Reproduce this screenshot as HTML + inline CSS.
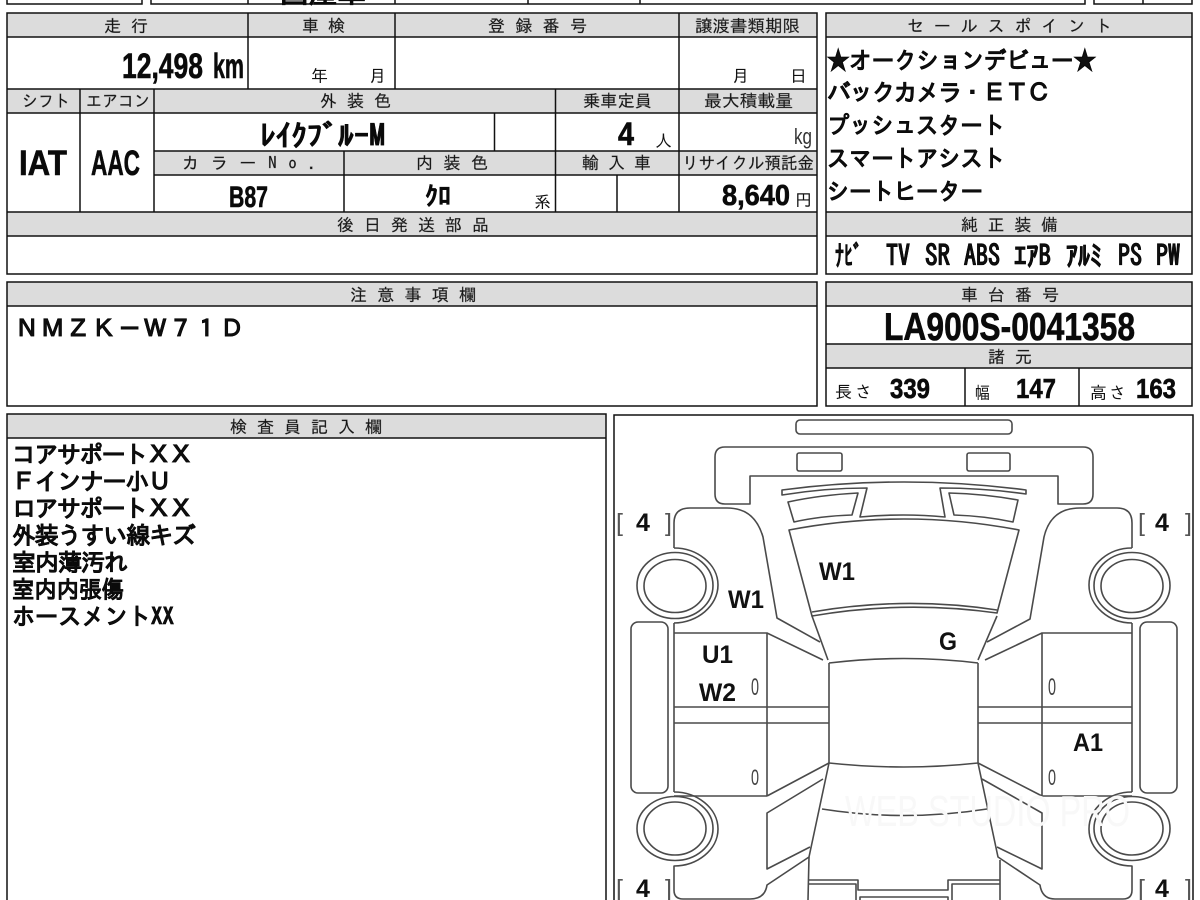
<!DOCTYPE html>
<html><head><meta charset="utf-8"><style>
html,body{margin:0;padding:0;background:#fff;width:1200px;height:900px;overflow:hidden}
svg{display:block}
text{font-family:"IPAGothic","Liberation Sans","Noto Sans CJK JP",sans-serif;fill:#111}
.h text{stroke:#555;stroke-width:.3}
.h{font-size:17px;fill:#333}
.t{font-size:17px;fill:#333}
.n{font-family:"Liberation Sans","IPAGothic",sans-serif;font-weight:bold;fill:#0a0a0a;stroke:#0a0a0a;stroke-width:.6}
.b{font-weight:bold;fill:#0a0a0a;stroke:#0a0a0a;stroke-width:.3}
.j{font-size:24px;font-weight:bold;fill:#0a0a0a}
.j text{stroke:#0a0a0a;stroke-width:.25}
.l{font-family:"Liberation Sans","Noto Sans CJK JP",sans-serif;font-weight:bold;font-size:25px;fill:#111}
.br{font-family:"Liberation Sans",sans-serif;font-size:25px;fill:#555}
.g{fill:#dcdcdc;stroke:none}
.k{fill:none;stroke:#111;stroke-width:1.5}
.d{fill:none;stroke:#4a4a4a;stroke-width:1.6;stroke-linejoin:round}
.z{font-family:"Liberation Sans",sans-serif;fill:#444}
</style></head><body>
<svg width="1200" height="900" viewBox="0 0 1200 900" xmlns="http://www.w3.org/2000/svg">
<!-- top strip -->
<g class="k">
<path d="M7 0V4H142V0M151 0V4H248V0M248 0V4H395V0M395 0V4H528V0M528 0V4H640V0M640 0V4H1085V0M1094 0V4H1143V0M1143 0V4H1192V0"/>
</g>
<text x="280" y="3" class="b" font-size="24" textLength="86" lengthAdjust="spacingAndGlyphs">国産車</text>

<!-- main panel fills -->
<rect class="g" x="7" y="13" width="810" height="24"/>
<rect class="g" x="7" y="89" width="810" height="24"/>
<rect class="g" x="154" y="151" width="525" height="24"/>
<rect class="g" x="679" y="151" width="138" height="24"/>
<rect class="g" x="7" y="212" width="810" height="24"/>
<rect class="g" x="826" y="13" width="366" height="24"/>
<rect class="g" x="826" y="212" width="366" height="24"/>
<rect class="g" x="7" y="282" width="810" height="24"/>
<rect class="g" x="826" y="282" width="366" height="24"/>
<rect class="g" x="826" y="344" width="366" height="24"/>
<rect class="g" x="7" y="414" width="599" height="24"/>

<!-- main panel lines -->
<g class="k">
<rect x="7" y="13" width="810" height="261"/>
<path d="M7 37H817M7 89H817M7 113H817M154 151H817M154 175H817M7 212H817M7 236H817"/>
<path d="M248 13V89M395 13V89M679 13V212M80 89V212M154 89V212M494.500 113V151M344 151V212M555.500 89V212M617 175V212"/>
<rect x="826" y="13" width="366" height="261"/>
<path d="M826 37H1192M826 212H1192M826 236H1192"/>
<rect x="7" y="282" width="810" height="124"/>
<path d="M7 306H817"/>
<rect x="826" y="282" width="366" height="124"/>
<path d="M826 306H1192M826 344H1192M826 368H1192M965 368V406M1079 368V406"/>
<path d="M7 900V414H606V900M7 438H606"/>
<path d="M614 900V415H1193V900"/>
</g>

<!-- headers -->
<g class="h">
<text x="104" y="32" textLength="44">走行</text>
<text x="302" y="32" textLength="43">車検</text>
<text x="488" y="32" textLength="99">登録番号</text>
<text x="695" y="32" textLength="105" lengthAdjust="spacingAndGlyphs">譲渡書類期限</text>
<text x="907" y="32" textLength="205">セールスポイント</text>
<text x="22" y="107" textLength="48" lengthAdjust="spacingAndGlyphs">シフト</text>
<text x="86" y="107" textLength="64" lengthAdjust="spacingAndGlyphs">エアコン</text>
<text x="320" y="107" textLength="71">外装色</text>
<text x="583" y="107" textLength="69" lengthAdjust="spacingAndGlyphs">乗車定員</text>
<text x="704" y="107" textLength="89" lengthAdjust="spacingAndGlyphs">最大積載量</text>
<text x="182" y="169" textLength="135">カラーNo.</text>
<text x="416" y="169" textLength="72">内装色</text>
<text x="582" y="169" textLength="69">輸入車</text>
<text x="682" y="169" textLength="132" lengthAdjust="spacingAndGlyphs">リサイクル預託金</text>
<text x="337" y="231" textLength="152">後日発送部品</text>
<text x="961" y="231" textLength="97">純正装備</text>
<text x="350" y="301" textLength="126">注意事項欄</text>
<text x="961" y="301" textLength="98">車台番号</text>
<text x="988" y="363" textLength="44">諸元</text>
<text x="230" y="433" textLength="152">検査員記入欄</text>
</g>

<!-- small labels -->
<g class="t">
<text x="311" y="82">年</text><text x="369" y="82">月</text>
<text x="732" y="82">月</text><text x="790" y="82">日</text>
<text x="655" y="147">人</text>
<text x="534" y="208">系</text>
<text x="795" y="206">円</text>
<text x="835" y="398" textLength="37">長さ</text>
<text x="975" y="399" textLength="15" lengthAdjust="spacingAndGlyphs">幅</text>
<text x="1090" y="399" textLength="36">高さ</text>
</g>
<text x="794" y="144" font-size="22" style="font-family:'Liberation Sans',sans-serif;fill:#333" textLength="18" lengthAdjust="spacingAndGlyphs">kg</text>

<!-- values -->
<text class="n" x="122" y="78" font-size="35" textLength="81" lengthAdjust="spacingAndGlyphs">12,498</text>
<text class="n" x="213" y="78" font-size="35" textLength="31" lengthAdjust="spacingAndGlyphs">km</text>
<text class="n" x="19" y="175" font-size="35" textLength="48" lengthAdjust="spacingAndGlyphs">IAT</text>
<text class="n" x="91" y="175" font-size="35" textLength="49" lengthAdjust="spacingAndGlyphs">AAC</text>
<text class="b" x="260" y="146" font-size="30" textLength="125" lengthAdjust="spacingAndGlyphs">ﾚｲｸﾌﾞﾙｰM</text>
<text class="n" x="618" y="145" font-size="32" textLength="16" lengthAdjust="spacingAndGlyphs">4</text>
<text class="n" x="229" y="207" font-size="30" textLength="39" lengthAdjust="spacingAndGlyphs">B87</text>
<text class="b" x="425" y="205" font-size="26" textLength="26" lengthAdjust="spacingAndGlyphs">ｸﾛ</text>
<text class="n" x="722" y="205" font-size="29" textLength="68" lengthAdjust="spacingAndGlyphs">8,640</text>

<!-- sales points -->
<g class="j">
<text x="827" y="69" textLength="269" lengthAdjust="spacingAndGlyphs">★オークションデビュー★</text>
<text x="827" y="101" textLength="224">バックカメラ・ＥＴＣ</text>
<text x="827" y="134" textLength="178" lengthAdjust="spacingAndGlyphs">プッシュスタート</text>
<text x="827" y="167" textLength="178" lengthAdjust="spacingAndGlyphs">スマートアシスト</text>
<text x="827" y="200" textLength="156" lengthAdjust="spacingAndGlyphs">シートヒーター</text>
</g>

<!-- equipment -->
<g class="b" font-size="29">
<text x="835" y="266" textLength="27" lengthAdjust="spacingAndGlyphs">ﾅﾋﾞ</text>
<text x="886" y="266" textLength="24" lengthAdjust="spacingAndGlyphs">TV</text>
<text x="925" y="266" textLength="25" lengthAdjust="spacingAndGlyphs">SR</text>
<text x="964" y="266" textLength="36" lengthAdjust="spacingAndGlyphs">ABS</text>
<text x="1014" y="266" textLength="37" lengthAdjust="spacingAndGlyphs">ｴｱB</text>
<text x="1066" y="266" textLength="36" lengthAdjust="spacingAndGlyphs">ｱﾙﾐ</text>
<text x="1118" y="266" textLength="24" lengthAdjust="spacingAndGlyphs">PS</text>
<text x="1156" y="266" textLength="24" lengthAdjust="spacingAndGlyphs">PW</text>
</g>

<!-- caution -->
<g class="j"><text x="15" y="337" textLength="229">ＮＭＺＫ－Ｗ７１Ｄ</text></g>

<!-- chassis -->
<text class="n" x="884" y="340" font-size="39" textLength="251" lengthAdjust="spacingAndGlyphs">LA900S-0041358</text>
<text class="n" x="890" y="398" font-size="28" textLength="40" lengthAdjust="spacingAndGlyphs">339</text>
<text class="n" x="1016" y="398" font-size="28" textLength="40" lengthAdjust="spacingAndGlyphs">147</text>
<text class="n" x="1136" y="398" font-size="28" textLength="40" lengthAdjust="spacingAndGlyphs">163</text>

<!-- inspector notes -->
<g class="j">
<text x="12" y="463" textLength="181">コアサポートＸＸ</text>
<text x="12" y="490" textLength="160">Ｆインナー小Ｕ</text>
<text x="12" y="517" textLength="181">ロアサポートＸＸ</text>
<text x="12" y="544" textLength="184">外装うすい線キズ</text>
<text x="12" y="571" textLength="116">室内薄汚れ</text>
<text x="12" y="598" textLength="112" lengthAdjust="spacingAndGlyphs">室内内張傷</text>
<text x="12" y="625" textLength="162" lengthAdjust="spacingAndGlyphs">ホースメントXX</text>
</g>

<!-- car diagram -->
<g class="d">
<rect x="796" y="420" width="216" height="14" rx="4"/>
<path d="M750 504H725Q715 504 715 494V457Q715 447 725 447H1083Q1093 447 1093 457V494Q1093 504 1083 504H1058V476H750Z"/>
<rect x="797" y="453" width="45" height="18" rx="2"/>
<rect x="967" y="453" width="43" height="18" rx="2"/>
<!-- glass top -->
<path d="M782 490Q904 474 1026 490L1026 494Q985 488 940 488L945 517Q904 513 860 517L867 488Q825 488 782 495Z"/>
<path d="M788 502Q820 495 858 493L852 515Q820 516 794 522Z"/>
<path d="M949 493Q985 494 1018 500L1013 522Q985 516 954 515Z"/>
<!-- windshield -->
<path d="M789 530Q904 508 1019 530L997 613Q904 600 812 616Z"/>
<path d="M812 612Q904 596 997 610"/>
<!-- left front -->
<path d="M674 548V523Q674 508 690 508H727C748 508 758 520 763 537L777 618L820 642"/>
<path d="M812 616L828 660"/>
<path d="M674 623V792M674 633H767L823 660"/>
<path d="M674 548C697 548 718 564 718 585C718 606 697 623 674 623"/>
<ellipse cx="675" cy="585.500" rx="38" ry="33"/>
<ellipse cx="675" cy="586" rx="31" ry="26.500"/>
<rect x="631" y="622" width="37" height="171" rx="7"/>
<!-- right front -->
<path d="M1132 548V523Q1132 508 1117 508H1080C1058 508 1048 520 1044 537L1030 619L987 642"/>
<path d="M997 616L978 660"/>
<path d="M1132 623V792M1132 633H1042L985 660"/>
<path d="M1132 548C1109 548 1089 564 1089 585C1089 606 1109 623 1132 623"/>
<ellipse cx="1132" cy="585.500" rx="38" ry="33"/>
<ellipse cx="1132" cy="586" rx="31" ry="26.500"/>
<rect x="1140" y="622" width="37" height="171" rx="7"/>
<!-- centre -->
<path d="M829 663V763M978 663V763M829 663Q904 654 978 663M829 763Q904 771 978 763"/>
<path d="M674 707H829M674 723H829M767 633V796M674 796H767M767 796L829 763"/>
<path d="M978 707H1132M978 723H1132M1042 633V796M1042 796H1132M1042 796L978 763"/>
<!-- rear -->
<path d="M674 792C697 792 718 808 718 829C718 850 697 866 674 866V890Q674 899 683 899H750Q765 899 767 885L809 857L829 763"/>
<path d="M823 779L767 813V869L810 847"/>
<ellipse cx="675" cy="828.500" rx="38" ry="32"/>
<ellipse cx="675" cy="828.500" rx="31" ry="26.500"/>
<path d="M1132 792C1109 792 1089 808 1089 829C1089 850 1109 866 1132 866V890Q1132 899 1123 899H1055Q1042 899 1040 885L998 857L978 763"/>
<path d="M982 779L1042 813V869L997 847"/>
<ellipse cx="1132" cy="828.500" rx="38" ry="32"/>
<ellipse cx="1132" cy="828.500" rx="31" ry="26.500"/>
<path d="M822 809Q904 822 987 809"/>
<!-- tailgate -->
<path d="M809 857L808 900M1000 860V900"/>
<path d="M808 880H858V890H948V880H1000M808 884H856V900M860 900V897H948V900M952 900V884H1000"/>
</g>

<!-- watermark -->
<text x="845" y="826" style="font-family:'Liberation Sans',sans-serif;fill:#f8f8f8" font-size="44" textLength="285" lengthAdjust="spacingAndGlyphs">WEB STUDIO PRO</text>

<!-- grade brackets -->
<g>
<text class="br" x="616" y="531" textLength="56" lengthAdjust="spacing">[ ]</text>
<text class="l" x="636" y="531">4</text>
<text class="br" x="1138" y="531" textLength="54" lengthAdjust="spacing">[ ]</text>
<text class="l" x="1155" y="531">4</text>
<text class="br" x="616" y="897" textLength="56" lengthAdjust="spacing">[ ]</text>
<text class="l" x="636" y="897">4</text>
<text class="br" x="1138" y="897" textLength="54" lengthAdjust="spacing">[ ]</text>
<text class="l" x="1155" y="897">4</text>
</g>
<text class="l" x="819" y="580" textLength="36" lengthAdjust="spacingAndGlyphs">W1</text>
<text class="l" x="728" y="608" textLength="36" lengthAdjust="spacingAndGlyphs">W1</text>
<text class="l" x="702" y="663" textLength="31" lengthAdjust="spacingAndGlyphs">U1</text>
<text class="l" x="699" y="701" textLength="37" lengthAdjust="spacingAndGlyphs">W2</text>
<text class="l" x="939" y="650" textLength="18" lengthAdjust="spacingAndGlyphs">G</text>
<text class="l" x="1073" y="751" textLength="30" lengthAdjust="spacingAndGlyphs">A1</text>
<text class="z" x="751" y="695" font-size="24" textLength="8" lengthAdjust="spacingAndGlyphs">0</text>
<text class="z" x="751" y="785" font-size="22" textLength="8" lengthAdjust="spacingAndGlyphs">0</text>
<text class="z" x="1048" y="695" font-size="24" textLength="8" lengthAdjust="spacingAndGlyphs">0</text>
<text class="z" x="1048" y="785" font-size="22" textLength="8" lengthAdjust="spacingAndGlyphs">0</text>
</svg>
</body></html>
